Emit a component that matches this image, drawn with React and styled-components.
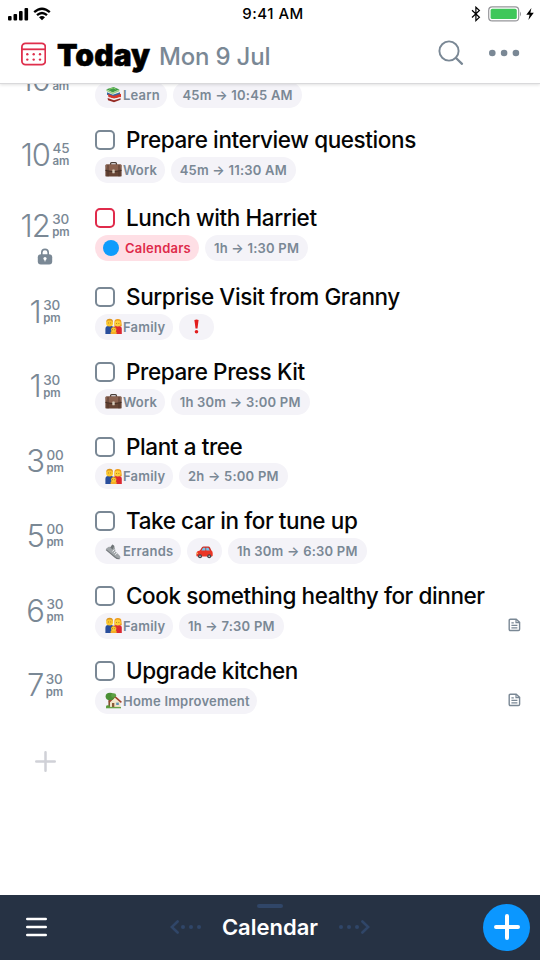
import styled, { createGlobalStyle } from "styled-components";

const GlobalStyle = createGlobalStyle`
  * {
    box-sizing: border-box;
  }
  body {
    margin: 0;
    background: #fff;
    font-family: Inter, "Liberation Sans", sans-serif;
  }
  svg {
    display: block;
    flex-shrink: 0;
  }
`;

const Screen = styled.div`
  width: 540px;
  height: 960px;
  display: flex;
  flex-direction: column;
  overflow: hidden;
  background: #fff;
`;

const Header = styled.header`
  height: 84px;
  flex-shrink: 0;
  background: #fff;
  border-bottom: 1px solid #d9d9db;
  box-shadow: 0 1px 3px rgba(0, 0, 0, 0.12);
  z-index: 1;
`;

const StatusBar = styled.div`
  height: 27px;
  display: grid;
  grid-template-columns: 1fr auto 1fr;
  align-items: center;
  padding: 0 6px 0 7px;
`;

const Signals = styled.div`
  display: flex;
  gap: 4px;
  align-items: center;
`;

const Clock = styled.div`
  font-size: 15px;
  font-weight: 500;
  letter-spacing: 0.5px;
  padding-left: 5px;
  color: #000;
`;

const Power = styled.div`
  display: flex;
  align-items: center;
  justify-content: flex-end;
`;

const TitleBar = styled.div`
  height: 54px;
  display: flex;
  align-items: center;
  padding: 0 20px 0 21px;
`;

const DayTitle = styled.h1`
  margin: 0 0 0 11px;
  width: 102px;
  padding-top: 2px;
  font-size: 30px;
  line-height: 36px;
  font-weight: 900;
  letter-spacing: 0.1px;
  -webkit-text-stroke: 0.5px #000;
  color: #000;
  white-space: nowrap;
`;

const DayDate = styled.span`
  flex: 1;
  font-size: 24px;
  line-height: 30px;
  padding-top: 6px;
  font-weight: 500;
  letter-spacing: -0.2px;
  color: #7a8895;
`;

const HeaderActions = styled.div`
  display: flex;
  align-items: center;
  gap: 24px;
  padding-bottom: 2px;
`;

const List = styled.main`
  flex: 1;
  overflow: hidden;
`;

const Tasks = styled.div`
  margin-top: -34px;
`;

const Row = styled.div`
  display: flex;
  height: ${(props) => props.$height}px;
`;

const TimeColumn = styled.div`
  width: 90px;
  flex-shrink: 0;
  display: flex;
  flex-direction: column;
  align-items: center;
  gap: 6px;
  padding-top: ${(props) => (props.$locked ? 5 : 12)}px;
`;

const Time = styled.div`
  display: flex;
  align-items: center;
  gap: 2.5px;
  height: 34px;
  color: #7a8895;
`;

const Hour = styled.span`
  font-size: 31px;
  line-height: 34px;
  padding-top: 1px;
  font-weight: 260;
  letter-spacing: -1px;
`;

const Minute = styled.span`
  display: flex;
  flex-direction: column;
  font-size: 13.5px;
  line-height: 14px;
  font-weight: 450;
  letter-spacing: -0.2px;
`;

const Meridiem = styled.span`
  height: 12px;
  font-size: 11.5px;
  line-height: 12px;
  font-weight: 600;
  letter-spacing: -0.2px;
`;

const Body = styled.div`
  flex: 1;
  padding: 0 19.5px 0 5px;
`;

const TitleLine = styled.div`
  height: 30px;
  display: flex;
  align-items: center;
  gap: 11px;
`;

const Checkbox = styled.span`
  width: 20px;
  height: 20px;
  border: 2px solid ${(props) => (props.$red ? "#e02b4b" : "#7a8895")};
  border-radius: 5px;
`;

const TaskTitle = styled.span`
  font-size: 22.5px;
  font-weight: 540;
  line-height: 30px;
  letter-spacing: -0.4px;
  color: #050505;
  white-space: nowrap;
`;

const ChipLine = styled.div`
  display: flex;
  align-items: center;
  gap: 6px;
  margin-top: 1.75px;
  height: 26px;
`;

const chipPadding = (props) => {
  if (props.$red) return "0 8px";
  return props.$icon ? "0 7.5px 0 10px" : "0 9px";
};

const Chip = styled.span`
  height: 26px;
  display: flex;
  align-items: center;
  gap: ${(props) => (props.$red ? 6 : 1)}px;
  padding: ${chipPadding};
  border-radius: 13px;
  background: ${(props) => (props.$red ? "#fedfe5" : "#f4f3f8")};
  color: ${(props) => (props.$red ? "#de2b4b" : "#7a8895")};
  font-size: 13px;
  font-weight: 600;
  letter-spacing: 0.22px;
  white-space: nowrap;
`;

const Dot = styled.span`
  width: 16px;
  height: 16px;
  border-radius: 50%;
  background: #109cfc;
`;

const NoteSlot = styled.span`
  margin-left: auto;
  padding-bottom: 2px;
`;

const AddLine = styled.div`
  display: flex;
  justify-content: center;
  width: 90px;
  padding-top: 20.5px;
`;

const Footer = styled.footer`
  height: 65px;
  flex-shrink: 0;
  display: grid;
  grid-template-columns: 1fr auto 1fr;
  align-items: center;
  padding: 0 10px 1px 26px;
  background: #263244;
  position: relative;
`;

const Handle = styled.span`
  position: absolute;
  top: 9px;
  left: 257px;
  width: 26px;
  height: 4px;
  border-radius: 2px;
  background: #304668;
`;

const Switcher = styled.div`
  display: flex;
  align-items: center;
  gap: 21px;
  margin-right: 16px;
`;

const SwitcherLabel = styled.span`
  font-size: 22px;
  font-weight: 600;
  line-height: 30px;
  color: #fff;
`;

const AddButton = styled.button`
  justify-self: end;
  width: 47px;
  height: 47px;
  padding: 0;
  border: none;
  border-radius: 50%;
  background: #0b97ff;
  display: flex;
  align-items: center;
  justify-content: center;
`;

const Cellular = () => (
  <svg width="22" height="14" viewBox="0 0 22 14">
    <rect x="1" y="9" width="3.6" height="4.5" rx="1" />
    <rect x="6.5" y="7" width="3.6" height="6.5" rx="1" />
    <rect x="12" y="4" width="3.6" height="9.5" rx="1" />
    <rect x="17.5" y="1" width="3.6" height="12.5" rx="1" />
  </svg>
);

const Wifi = () => (
  <svg width="18" height="14" viewBox="0 0 18 14" fill="none" stroke="#000" strokeWidth="2.3">
    <path d="M1.2 5.2Q9 -1.8 16.8 5.2" />
    <path d="M4 8.2Q9 3.8 14 8.2" />
    <path d="M9 13.3L6 10.3Q9 7.9 12 10.3Z" fill="#000" stroke="none" />
  </svg>
);

const Bluetooth = () => (
  <svg width="10" height="16" viewBox="0 0 10 16" fill="none" stroke="#000" strokeWidth="1.2">
    <path d="M1 4.3L8.4 11.3L4.9 14.6V1.2L8.4 4.5L1 11.5" />
  </svg>
);

const BatteryShell = styled.svg`
  margin: 0 4px 0 7px;
`;

const Battery = () => (
  <BatteryShell width="34" height="16" viewBox="0 0 34 16">
    <rect x="0.7" y="0.9" width="30" height="14" rx="3.5" fill="#fff" stroke="#96969a" strokeWidth="1.2" />
    <rect x="2.6" y="2.8" width="26.2" height="10.2" rx="1.6" fill="#3fc75a" />
    <path d="M32 5.5Q34 8 32 10.5Z" fill="#96969a" />
  </BatteryShell>
);

const Bolt = () => (
  <svg width="8" height="12" viewBox="0 0 8 12">
    <path d="M5.4 0L0.3 6.8H3.6L2.4 12L7.8 4.8H4.4Z" />
  </svg>
);

const CalendarIcon = () => (
  <svg width="25" height="24" viewBox="0 0 25 24" fill="none" stroke="#df2f4c" strokeWidth="1.8">
    <rect x="0.9" y="1.3" width="23.4" height="21.4" rx="3.6" />
    <path d="M1 7.3H24" />
    <g fill="#df2f4c" stroke="none">
      {[6.3, 12.7, 19].map((x) => (
        <g key={x}>
          <circle cx={x} cy="12.3" r="1.2" />
          <circle cx={x} cy="17.6" r="1.2" />
        </g>
      ))}
    </g>
  </svg>
);

const SearchIcon = () => (
  <svg width="26" height="26" viewBox="0 0 26 26" fill="none" stroke="#7a8895" strokeLinecap="round">
    <circle cx="11" cy="11" r="9.6" strokeWidth="1.9" />
    <path d="M18 18L24 23.8" strokeWidth="2.3" />
  </svg>
);

const MoreIcon = () => (
  <svg width="32" height="8" viewBox="0 0 32 8" fill="#7a8895">
    <circle cx="4.3" cy="4" r="3.3" />
    <circle cx="16.1" cy="4" r="3.3" />
    <circle cx="27.9" cy="4" r="3.3" />
  </svg>
);

const LockIcon = () => (
  <svg width="16" height="17" viewBox="0 0 16 17">
    <path d="M4.8 8V4.6a3.2 3.2 0 0 1 6.4 0V8" fill="none" stroke="#7a8895" strokeWidth="1.6" />
    <rect x="0.8" y="6.2" width="14.4" height="10.2" rx="3" fill="#7a8895" />
    <circle cx="8" cy="10.6" r="1.6" fill="#fff" />
    <path d="M8 11v2.4" stroke="#fff" strokeWidth="1" />
  </svg>
);

const NoteIcon = () => (
  <svg width="13" height="14" viewBox="0 0 13 14" fill="none" stroke="#7a8895" strokeWidth="1.4">
    <path d="M2.4 1.2H8.2L11.6 4.4V11.2Q11.6 12.5 10.4 12.5H2.4Q1.2 12.5 1.2 11.2V2.4Q1.2 1.2 2.4 1.2Z" />
    <path d="M8 1.4V4.6H11.4M3.4 4.9H5.8M3.4 7.3H9.4M3.4 9.8H9.4" strokeWidth="1.2" />
  </svg>
);

const Emoji = styled.svg.attrs({ viewBox: "0 0 17 17" })`
  width: 17px;
  height: 17px;
`;

const Books = () => (
  <Emoji>
    <path d="M1.4 3.2L8.6 1L14.4 3.6L7.6 6.6Z" fill="#3f9a47" />
    <path d="M1.4 3.2V5L7.6 8.2L14.4 5.2V3.6L7.6 6.6Z" fill="#9fcf86" />
    <path d="M4 3.2L8.4 2L11 3.2" fill="none" stroke="#8fd070" strokeWidth="0.9" />
    <path d="M2 6.2L7.8 8.8L15 6.2V9L8 11.4L2 8.8Z" fill="#34699f" />
    <path d="M3 8L8.6 10L16 7.8V11L9 12.8L3.4 11Z" fill="#d6382c" />
    <path d="M4.4 11.4L9 12.8L15 11.2V12.4L9 14L4.4 12.6Z" fill="#eef0f2" />
    <path d="M2.6 12L9 14.2L15.6 12.2V13.8L9 16.2L3 14.2Z" fill="#962b24" />
  </Emoji>
);

const Briefcase = () => (
  <Emoji>
    <path d="M5.6 4V2.6Q5.6 1.6 6.6 1.6H10.4Q11.4 1.6 11.4 2.6V4" fill="none" stroke="#493e38" strokeWidth="1.3" />
    <rect x="0.4" y="3.6" width="16.2" height="12" rx="1.2" fill="#664434" />
    <path d="M0.6 4.8Q0.8 3.6 1.8 3.6H15.2Q16.3 3.6 16.4 4.8L15 10H2Z" fill="#8a6250" />
    <path d="M0.4 9.4Q8.5 12 16.6 9.4" fill="none" stroke="#3e2b23" strokeWidth="0.9" />
    <rect x="7.3" y="8.6" width="2.4" height="3.6" rx="0.5" fill="#d4c9b8" />
    <path d="M3 4V15.4M14 4V15.4" stroke="#4a332a" strokeWidth="0.8" />
  </Emoji>
);

const Family = () => (
  <Emoji>
    <path d="M0.4 16V11Q0.4 8 3.2 8H6.5Q8.5 8 8.5 11V16Z" fill="#294e9c" />
    <path d="M8.5 16V11Q8.5 8 11 8H14Q16.8 8 16.8 11V16Z" fill="#dc2830" />
    <path d="M9.4 8V4Q9.4 1 12.8 1Q16.5 1 16.4 4.2L16.8 8.2Z" fill="#ef9a1a" />
    <circle cx="4.6" cy="5" r="3.5" fill="#fbc72f" />
    <path d="M1.3 4Q1.2 0.9 4.7 0.8Q8 0.9 7.9 4L6 2.6H3Z" fill="#d99420" />
    <circle cx="12.7" cy="5.4" r="3" fill="#fdd03a" />
    <path d="M5.6 16V14.5Q6 12.5 8.6 12.5Q11.4 12.5 11.6 14.5V16Z" fill="#f3ae28" />
    <circle cx="8.7" cy="11.5" r="2.6" fill="#fbc631" />
    <path d="M6.4 10.6Q8.7 7.5 11 10.6" fill="none" stroke="#bf761c" strokeWidth="1" />
    <path d="M3.3 5h0.6M5.5 5h0.6M11.4 5.5h0.6M13.6 5.5h0.6M7.4 11.7h0.6M9.5 11.7h0.6" stroke="#694318" strokeWidth="0.8" />
  </Emoji>
);

const Exclamation = () => (
  <Emoji>
    <path d="M6.4 2Q8.5 1 10.6 2L9.5 10.6H7.5Z" fill="#e21d1d" />
    <circle cx="8.5" cy="13.8" r="1.8" fill="#e21d1d" />
  </Emoji>
);

const Shoe = () => (
  <Emoji>
    <path d="M1.2 5.4L4.2 3.4L5.2 4.6L7.4 1.4L9.4 3L10.6 8.6L15 13Q16.2 15.4 14 15.9Q12 16 10 14.2L1.4 7Z" fill="#a0a5a8" />
    <path d="M5.2 4.6L7.4 1.4L9.2 3L7.8 6.6Z" fill="#6f7477" />
    <path d="M1 6.6L9.8 14Q12 16 14.6 15.7" fill="none" stroke="#74797c" strokeWidth="1.1" />
    <path d="M7.4 8.4L9.4 6.6M8.8 10L10.6 8.4M10.2 11.6L11.8 10.2" stroke="#fff" strokeWidth="0.9" />
  </Emoji>
);

const Car = () => (
  <Emoji>
    <path d="M3.6 8L6 4.2Q6.5 3.4 7.6 3.4H12.4Q13.5 3.4 14 4.4L15.6 8Z" fill="#cf2d22" />
    <path d="M5.2 8L7 4.8H9.4V8ZM10.2 8V4.8H12.4L14 8Z" fill="#76c3ea" />
    <path d="M0.4 12.8V10Q0.8 8 4 7.6H14.8Q16.7 8 16.7 10V12.8Q16.4 13.6 15.4 13.6H1.4Q0.5 13.6 0.4 12.8Z" fill="#ea3525" />
    <circle cx="4" cy="13.3" r="2" fill="#41454b" />
    <circle cx="13.2" cy="13.3" r="2" fill="#41454b" />
    <circle cx="4" cy="13.3" r="0.8" fill="#cfd3d8" />
    <circle cx="13.2" cy="13.3" r="0.8" fill="#cfd3d8" />
    <path d="M0.5 10.2H2" stroke="#fadb68" strokeWidth="1.1" />
  </Emoji>
);

const House = () => (
  <Emoji>
    <path d="M3.4 6H5.2V15H3.4Z" fill="#7d5330" />
    <path d="M5 9H15.4V15.4H5Z" fill="#f1e4c8" />
    <path d="M5 9.4L10 4.6L15.4 9.4Z" fill="#f5ead2" />
    <path d="M4 10.2L9.8 4.6L16.4 10.4" fill="none" stroke="#a1422d" strokeWidth="1.5" />
    <ellipse cx="5" cy="4.4" rx="4.4" ry="3.6" fill="#4a8f35" />
    <ellipse cx="8.6" cy="3.4" rx="2.6" ry="2.2" fill="#5da043" />
    <rect x="7" y="11" width="2.3" height="4.4" fill="#8a5a38" />
    <rect x="11.2" y="10.6" width="2.6" height="2.4" fill="#6093b5" />
    <path d="M1 15.6H16" stroke="#67a348" strokeWidth="1.4" />
    <ellipse cx="3" cy="14.4" rx="2" ry="1.2" fill="#58993a" />
  </Emoji>
);

const BackIcon = () => (
  <svg width="31" height="14" viewBox="0 0 31 14" fill="#304668">
    <path d="M7.6 1.5L1.8 7L7.6 12.5" fill="none" stroke="#304668" strokeWidth="2.6" strokeLinecap="round" />
    <circle cx="13" cy="7" r="2" />
    <circle cx="21" cy="7" r="2" />
    <circle cx="29" cy="7" r="2" />
  </svg>
);

const ForwardIcon = () => (
  <svg width="31" height="14" viewBox="0 0 31 14" fill="#304668">
    <path d="M23.4 1.5L29.2 7L23.4 12.5" fill="none" stroke="#304668" strokeWidth="2.6" strokeLinecap="round" />
    <circle cx="2" cy="7" r="2" />
    <circle cx="10" cy="7" r="2" />
    <circle cx="18" cy="7" r="2" />
  </svg>
);

const MenuIcon = () => (
  <svg width="21" height="20" viewBox="0 0 21 20" stroke="#fff" strokeWidth="2.4" strokeLinecap="round">
    <path d="M1.2 2H19.8M1.2 10H19.8M1.2 18H19.8" />
  </svg>
);

const PlusIcon = ({ size, colour, width }) => (
  <svg width={size} height={size} viewBox={`0 0 ${size} ${size}`} stroke={colour} strokeWidth={width} strokeLinecap="round">
    <path d={`M${size / 2} ${width / 2}V${size - width / 2}M${width / 2} ${size / 2}H${size - width / 2}`} />
  </svg>
);

// the first task is scrolled under the header, only its lower half shows
const tasks = [
  { hour: "10", minute: "\u2007\u2007", half: "am", chips: [{ icon: <Books />, text: "Learn" }, { text: "45m → 10:45 AM" }], height: 75 },
  { hour: "10", minute: "45", half: "am", title: "Prepare interview questions", height: 78, chips: [{ icon: <Briefcase />, text: "Work" }, { text: "45m → 11:30 AM" }] },
  { hour: "12", minute: "30", half: "pm", title: "Lunch with Harriet", height: 79, red: true, locked: true, chips: [{ icon: <Dot />, text: "Calendars", red: true }, { text: "1h → 1:30 PM" }] },
  { hour: "1", minute: "30", half: "pm", title: "Surprise Visit from Granny", chips: [{ icon: <Family />, text: "Family" }, { icon: <Exclamation /> }] },
  { hour: "1", minute: "30", half: "pm", title: "Prepare Press Kit", chips: [{ icon: <Briefcase />, text: "Work" }, { text: "1h 30m → 3:00 PM" }] },
  { hour: "3", minute: "00", half: "pm", title: "Plant a tree", chips: [{ icon: <Family />, text: "Family" }, { text: "2h → 5:00 PM" }] },
  { hour: "5", minute: "00", half: "pm", title: "Take car in for tune up", chips: [{ icon: <Shoe />, text: "Errands" }, { icon: <Car /> }, { text: "1h 30m → 6:30 PM" }] },
  { hour: "6", minute: "30", half: "pm", title: "Cook something healthy for dinner", note: true, chips: [{ icon: <Family />, text: "Family" }, { text: "1h → 7:30 PM" }] },
  { hour: "7", minute: "30", half: "pm", title: "Upgrade kitchen", note: true, chips: [{ icon: <House />, text: "Home Improvement" }] },
];

const TaskRow = ({ task }) => (
  <Row $height={task.height || 74.75}>
    <TimeColumn $locked={task.locked}>
      <Time>
        <Hour>{task.hour}</Hour>
        <Minute>
          {task.minute}
          <Meridiem>{task.half}</Meridiem>
        </Minute>
      </Time>
      {task.locked && <LockIcon />}
    </TimeColumn>
    <Body>
      <TitleLine>
        {task.title && (
          <>
            <Checkbox $red={task.red} />
            <TaskTitle>{task.title}</TaskTitle>
          </>
        )}
      </TitleLine>
      <ChipLine>
        {task.chips.map((chip, i) => (
          <Chip key={i} $red={chip.red} $icon={Boolean(chip.icon && chip.text)}>
            {chip.icon}
            {chip.text}
          </Chip>
        ))}
        {task.note && (
          <NoteSlot>
            <NoteIcon />
          </NoteSlot>
        )}
      </ChipLine>
    </Body>
  </Row>
);

const App = () => {
  return (
    <>
      <GlobalStyle />
      <Screen>
        <Header>
          <StatusBar>
            <Signals>
              <Cellular />
              <Wifi />
            </Signals>
            <Clock>9:41 AM</Clock>
            <Power>
              <Bluetooth />
              <Battery />
              <Bolt />
            </Power>
          </StatusBar>
          <TitleBar>
            <CalendarIcon />
            <DayTitle>Today</DayTitle>
            <DayDate>Mon 9 Jul</DayDate>
            <HeaderActions>
              <SearchIcon />
              <MoreIcon />
            </HeaderActions>
          </TitleBar>
        </Header>
        <List>
          <Tasks>
            {tasks.map((task, i) => (
              <TaskRow key={i} task={task} />
            ))}
          </Tasks>
          <AddLine>
            <PlusIcon size={21} colour="#d0d1d7" width={2.5} />
          </AddLine>
        </List>
        <Footer>
          <Handle />
          <MenuIcon />
          <Switcher>
            <BackIcon />
            <SwitcherLabel>Calendar</SwitcherLabel>
            <ForwardIcon />
          </Switcher>
          <AddButton>
            <PlusIcon size={26} colour="#fff" width={4} />
          </AddButton>
        </Footer>
      </Screen>
    </>
  );
};

export default App;
